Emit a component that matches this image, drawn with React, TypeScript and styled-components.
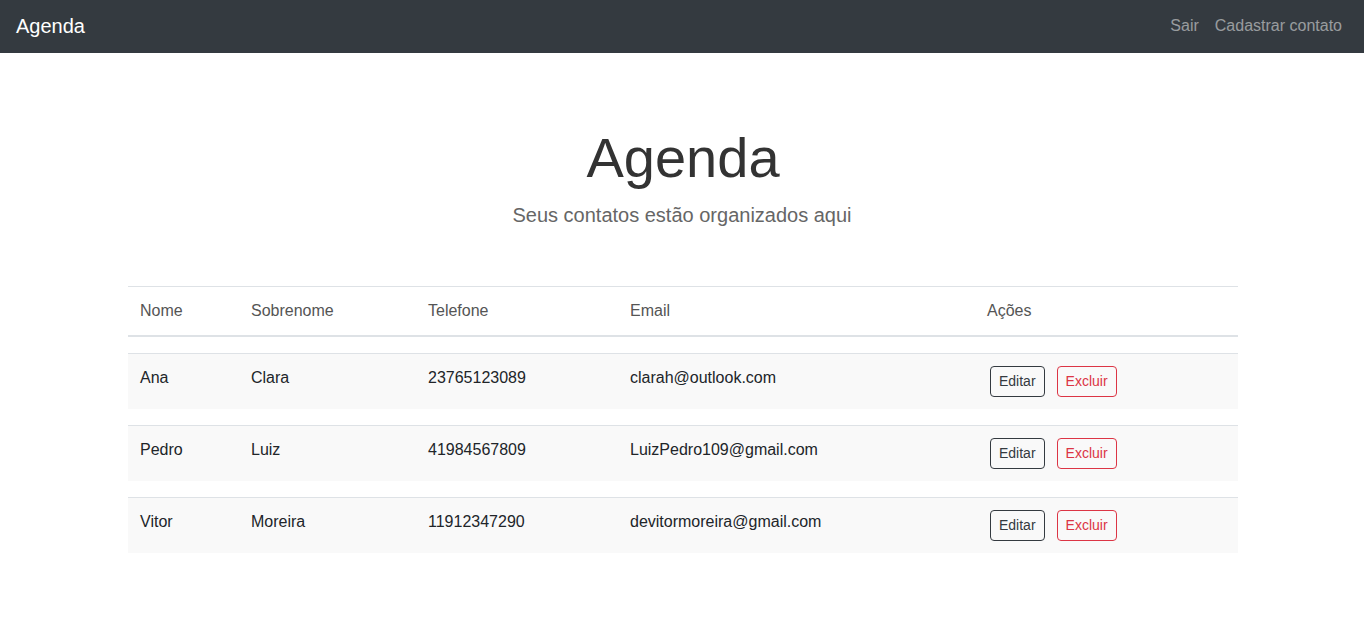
import React from "react";
import styled, { createGlobalStyle } from "styled-components";

const GlobalStyle = createGlobalStyle`
  * { box-sizing: border-box; }
  html, body { margin: 0; padding: 0; background: #fff; }
  body {
    font-family: "Liberation Sans", Arial, sans-serif;
    font-size: 16px;
    line-height: 1.5;
    color: #212529;
  }
`;

const NavBar = styled.nav`
  height: 53px;
  background: #343a40;
  display: flex;
  align-items: center;
  justify-content: space-between;
  padding: 0 14px 0 16px;
`;

const Brand = styled.a`
  color: #fff;
  font-size: 20px;
  line-height: 30px;
  text-decoration: none;
  margin-top: -2px;
`;

const NavLinks = styled.div`
  display: flex;
  align-items: center;
  margin-top: -2px;
`;

const NavLink = styled.a`
  color: rgba(255, 255, 255, 0.5);
  font-size: 16px;
  line-height: 24px;
  padding: 0 8px;
  text-decoration: none;
  cursor: pointer;
`;

const Hero = styled.header`
  display: flex;
  flex-direction: column;
  align-items: center;
  padding: 71px 0 56px;
`;

const Title = styled.h1`
  margin: 0 0 9px 2px;
  font-size: 56px;
  font-weight: 400;
  line-height: 67px;
  color: #333;
`;

const Lead = styled.p`
  margin: 0;
  font-size: 20px;
  line-height: 30px;
  color: #666;
`;

const Container = styled.main`
  width: 1110px;
  margin: 0 0 0 128px;
`;

const Table = styled.table`
  width: 100%;
  border-collapse: separate;
  border-spacing: 0;
  table-layout: fixed;
`;

const HeadCell = styled.th<{ $w: number }>`
  width: ${(p) => p.$w}px;
  text-align: left;
  font-weight: 400;
  color: #555;
  padding: 12px;
  line-height: 24px;
  border-top: 1px solid #dee2e6;
  border-bottom: 2px solid #dee2e6;
`;

const Spacer = styled.tr`
  td { padding: 0; border: 0; height: 16px; }
`;

const Row = styled.tr`
  background: #f9f9f9;
`;

const Cell = styled.td`
  padding: 12px;
  vertical-align: top;
  line-height: 24px;
  color: #212529;
  border-top: 1px solid #dee2e6;
`;

const ActionCell = styled(Cell)`
  padding: 12px 12px 12px 15px;
`;

const Actions = styled.div`
  display: flex;
  gap: 12px;
`;

const Button = styled.button<{ $variant: "dark" | "danger" }>`
  font-family: "Liberation Sans", Arial, sans-serif;
  font-size: 14px;
  line-height: 21px;
  padding: 4px 8px;
  background: transparent;
  border-radius: 4px;
  border: 1px solid ${(p) => (p.$variant === "dark" ? "#343a40" : "#dc3545")};
  color: ${(p) => (p.$variant === "dark" ? "#343a40" : "#dc3545")};
  cursor: pointer;
`;

const columns = [
  { label: "Nome", w: 111 },
  { label: "Sobrenome", w: 177 },
  { label: "Telefone", w: 202 },
  { label: "Email", w: 357 },
  { label: "Ações", w: 263 },
];

const contacts = [
  { nome: "Ana", sobrenome: "Clara", telefone: "23765123089", email: "clarah@outlook.com" },
  { nome: "Pedro", sobrenome: "Luiz", telefone: "41984567809", email: "LuizPedro109@gmail.com" },
  { nome: "Vitor", sobrenome: "Moreira", telefone: "11912347290", email: "devitormoreira@gmail.com" },
];

export default function App() {
  return (
    <>
      <GlobalStyle />
      <NavBar>
        <Brand>Agenda</Brand>
        <NavLinks>
          <NavLink>Sair</NavLink>
          <NavLink>Cadastrar contato</NavLink>
        </NavLinks>
      </NavBar>
      <Hero>
        <Title>Agenda</Title>
        <Lead>Seus contatos estão organizados aqui</Lead>
      </Hero>
      <Container>
        <Table>
          <thead>
            <tr>
              {columns.map((c) => (
                <HeadCell key={c.label} $w={c.w}>
                  {c.label}
                </HeadCell>
              ))}
            </tr>
          </thead>
          <tbody>
            {contacts.map((c) => (
              <React.Fragment key={c.telefone}>
                <Spacer>
                  <td colSpan={5} />
                </Spacer>
                <Row>
                  <Cell>{c.nome}</Cell>
                  <Cell>{c.sobrenome}</Cell>
                  <Cell>{c.telefone}</Cell>
                  <Cell>{c.email}</Cell>
                  <ActionCell>
                    <Actions>
                      <Button $variant="dark">Editar</Button>
                      <Button $variant="danger">Excluir</Button>
                    </Actions>
                  </ActionCell>
                </Row>
              </React.Fragment>
            ))}
          </tbody>
        </Table>
      </Container>
    </>
  );
}
